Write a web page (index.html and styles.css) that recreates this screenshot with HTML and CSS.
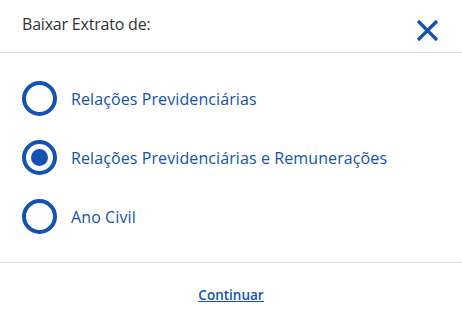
FILE: index.html
```html
<!DOCTYPE html>
<html lang="pt-BR">

<head>
  <meta charset="UTF-8">
  <title>Baixar Extrato</title>
  <link rel="stylesheet" href="styles.css">
</head>

<body>
  <div class="modal">
    <div class="modal-header">
      <span class="modal-title">Baixar Extrato de:</span>
      <button class="close-btn" aria-label="Fechar">
        <svg width="23" height="23" viewBox="0 0 23 23">
          <path d="M2 2 L21 21 M21 2 L2 21" stroke="#1351b4" stroke-width="3.2" fill="none" />
        </svg>
      </button>
    </div>

    <div class="modal-body">
      <label class="option">
        <input type="radio" name="extrato" value="rp">
        <span class="radio"></span>
        <span class="option-label">Relações Previdenciárias</span>
      </label>
      <label class="option">
        <input type="radio" name="extrato" value="rpr" checked>
        <span class="radio"></span>
        <span class="option-label">Relações Previdenciárias e Remunerações</span>
      </label>
      <label class="option">
        <input type="radio" name="extrato" value="ac">
        <span class="radio"></span>
        <span class="option-label">Ano Civil</span>
      </label>
    </div>

    <div class="modal-footer">
      <a href="#" class="continue-link">Continuar</a>
    </div>
  </div>
</body>

</html>
```

FILE: styles.css
```css
body {
  margin: 0;
  padding: 0;
  background-color: #fff;
  font-family: "Open Sans", Lato, sans-serif;
}

.modal {
  width: 462px;
  height: 323px;
  display: flex;
  flex-direction: column;
}

.modal-header {
  height: 53px;
  box-sizing: border-box;
  display: flex;
  align-items: center;
  justify-content: space-between;
  padding: 0 23px 0 22px;
  border-bottom: 1px solid #dcdcdc;
}

.modal-title {
  font-size: 16px;
  letter-spacing: -0.2px;
  color: #333;
  margin-top: -4px;
}

.close-btn {
  border: none;
  background: none;
  padding: 0;
  margin-top: 8px;
  width: 23px;
  height: 23px;
  cursor: pointer;
}

.close-btn svg {
  display: block;
}

.modal-body {
  padding: 28px 0 0 22px;
  height: 210px;
  box-sizing: border-box;
  border-bottom: 1px solid #dcdcdc;
}

.option {
  display: flex;
  align-items: center;
  height: 35px;
  margin-bottom: 24px;
  cursor: pointer;
}

.option input {
  display: none;
}

.radio {
  width: 35px;
  height: 35px;
  box-sizing: border-box;
  border: 4px solid #1351b4;
  border-radius: 50%;
  display: flex;
  align-items: center;
  justify-content: center;
  margin-right: 14px;
}

.option input:checked + .radio::after {
  content: "";
  width: 17px;
  height: 17px;
  border-radius: 50%;
  background-color: #1351b4;
}

.option-label {
  font-size: 16px;
  letter-spacing: 0.1px;
  color: #1351b4;
}

.modal-footer {
  flex: 1;
  display: flex;
  justify-content: center;
  padding-top: 23px;
  box-sizing: border-box;
}

.continue-link {
  font-size: 13.5px;
  font-weight: 600;
  color: #1351b4;
  text-decoration: underline;
}
```
